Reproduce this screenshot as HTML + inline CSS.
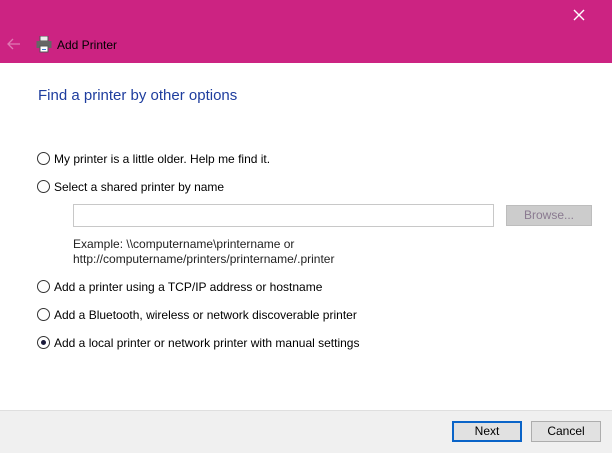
<!DOCTYPE html>
<html><head><style>
body{margin:0;width:612px;height:452px;position:relative;background:#fff;font-family:"Liberation Sans",sans-serif;font-size:12px;color:#000;overflow:hidden}
.a{position:absolute;white-space:nowrap}
.top{position:absolute;left:0;top:0;width:612px;height:63px;background:#cc2382}
.rad{position:absolute;width:11px;height:11px;border:1px solid #333;border-radius:50%;background:#fff}
.dot{position:absolute;left:3px;top:3px;width:5px;height:5px;border-radius:50%;background:#1a1a3a}
.btn{position:absolute;height:19px;border:1px solid #adadad;background:#e1e1e1;text-align:center;line-height:19px;font-size:12px}
</style></head><body>
<div class="top"></div>
<svg class="a" style="left:573px;top:9px" width="12" height="12"><path d="M1 1L11 11M11 1L1 11" stroke="#fff" stroke-width="1.4"/></svg>
<svg class="a" style="left:7px;top:38px" width="14" height="12"><path d="M1 6H13M6 1L1 6L6 11" stroke="#e07ab4" stroke-width="1.3" fill="none"/></svg>
<svg class="a" style="left:36px;top:36px" width="16" height="17"><rect x="4" y="0" width="8" height="5" fill="#eee" stroke="#555"/><rect x="0.5" y="5" width="15" height="7" fill="#666"/><rect x="4" y="10" width="8" height="6" fill="#fff" stroke="#555"/><rect x="6" y="13" width="4" height="1" fill="#3a7bd5"/></svg>
<div class="a" style="left:57px;top:38px;font-size:12px">Add Printer</div>
<div class="a" style="left:38px;top:87px;font-size:15px;color:#1e3d9e">Find a printer by other options</div>

<div class="rad" style="left:37px;top:152px"></div>
<div class="a" style="left:54px;top:152px">My printer is a little older. Help me find it.</div>
<div class="rad" style="left:37px;top:180px"></div>
<div class="a" style="left:54px;top:180px">Select a shared printer by name</div>
<div class="a" style="left:73px;top:204px;width:421px;height:23px;border:1px solid #c8c8c8;box-sizing:border-box"></div>
<div class="btn" style="left:506px;top:205px;width:84px;color:#8a7a90;background:#ccc;border-color:#bdbdbd">Browse...</div>
<div class="a" style="left:73px;top:237px;line-height:15px;color:#222">Example: \\computername\printername or<br>http://computername/printers/printername/.printer</div>

<div class="rad" style="left:37px;top:280px"></div>
<div class="a" style="left:54px;top:280px">Add a printer using a TCP/IP address or hostname</div>
<div class="rad" style="left:37px;top:308px"></div>
<div class="a" style="left:54px;top:308px">Add a Bluetooth, wireless or network discoverable printer</div>
<div class="rad" style="left:37px;top:336px"><div class="dot"></div></div>
<div class="a" style="left:54px;top:336px">Add a local printer or network printer with manual settings</div>

<div class="a" style="left:0;top:410px;width:612px;height:42px;background:#f0f0f0;border-top:1px solid #dfdfdf"></div>
<div class="btn" style="left:452px;top:421px;width:66px;border:2px solid #0a64c8;height:17px;line-height:17px">Next</div>
<div class="btn" style="left:531px;top:421px;width:68px">Cancel</div>
</body></html>
